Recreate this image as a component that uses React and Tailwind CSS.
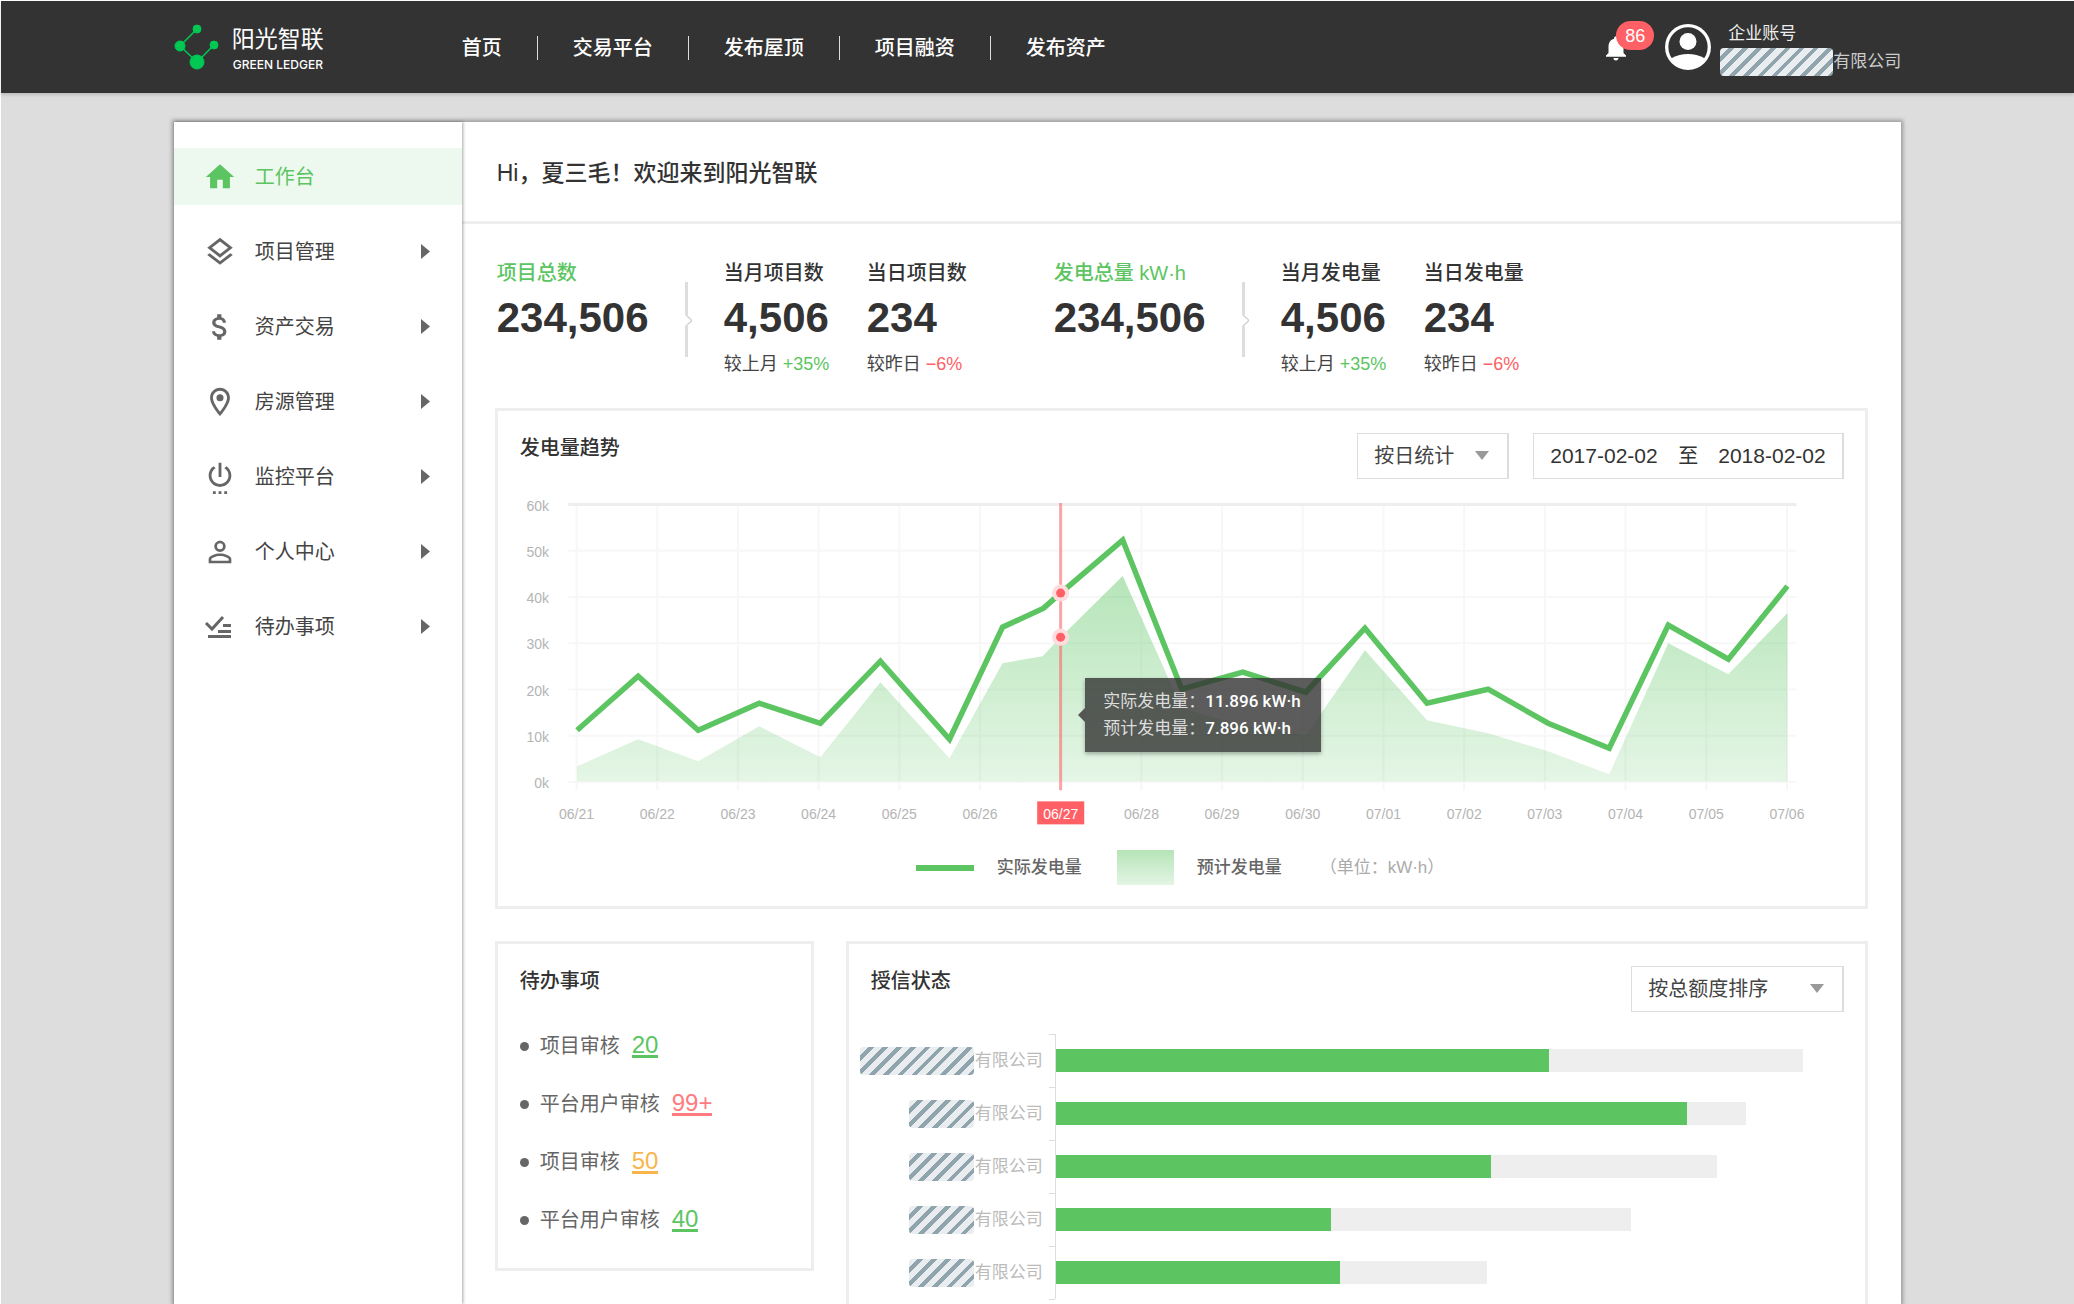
import React from "react";
import {
  MdHome,
  MdOutlineLayers,
  MdAttachMoney,
  MdOutlineLocationOn,
  MdSettingsPower,
  MdPersonOutline,
  MdNotifications,
} from "react-icons/md";

function TodoIcon({ size = 34 }) {
  return (
    <svg width={size} height={size} viewBox="0 0 34 34" fill="none" stroke="currentColor" strokeWidth="3">
      <path d="M3 13l6 6L20 7" />
      <path d="M20 15.5h8M15 21.5h13M5 26.5h23" />
    </svg>
  );
}

const MENU = [
  { label: "工作台", Icon: MdHome, active: true },
  { label: "项目管理", Icon: MdOutlineLayers },
  { label: "资产交易", Icon: MdAttachMoney },
  { label: "房源管理", Icon: MdOutlineLocationOn },
  { label: "监控平台", Icon: MdSettingsPower },
  { label: "个人中心", Icon: MdPersonOutline },
  { label: "待办事项", Icon: TodoIcon },
];

const NAV = ["首页", "交易平台", "发布屋顶", "项目融资", "发布资产"];

const HATCH =
  "rounded-[4px] bg-[repeating-linear-gradient(135deg,#e9edf0_0px,#e9edf0_6px,#90a4ae_6px,#90a4ae_10px)]";

function Header() {
  return (
    <header className="relative z-10 h-[92px] shrink-0 bg-[#333333] text-white shadow-[0_2px_3px_rgba(0,0,0,0.15)]">
      <div className="mx-auto flex h-full w-10/12 items-center">
        <a href="#" className="flex items-center">
          <svg width="46" height="46" viewBox="0 0 46 46" fill="#00c853" stroke="#00c853">
            <path d="M23 5L6 22L23 38L40 21" fill="none" strokeWidth="1.5" />
            <circle cx="23" cy="5" r="4" />
            <circle cx="6" cy="22" r="5" />
            <circle cx="40" cy="21" r="4" />
            <circle cx="23" cy="38" r="7" />
          </svg>
          <span className="ml-3 flex w-24 flex-col pt-1">
            <span className="text-[23px] leading-8">阳光智联</span>
            <span className="whitespace-nowrap pl-px font-['Inter'] text-xs font-medium leading-5">
              GREEN LEDGER
            </span>
          </span>
        </a>
        <nav className="ml-[99px] flex items-center pt-0.5">
          {NAV.map((n, i) => (
            <a
              key={n}
              href="#"
              className={
                "px-[35px] text-xl font-medium leading-6 " + (i > 0 ? "border-l border-[#dddddd]" : "")
              }
            >
              {n}
            </a>
          ))}
        </nav>
        <div className="ml-auto flex items-center">
          <button type="button" aria-label="通知" className="relative mr-[11px] h-[46px] w-[50px]">
            <MdNotifications size={30} className="absolute left-[-3px] top-[9px]" />
            <span className="absolute right-0 top-[-3px] flex h-[29px] w-[38px] items-center justify-center rounded-full bg-[#ff6065] text-lg leading-none">
              86
            </span>
          </button>
          <svg width="46" height="46" viewBox="0 0 46 46">
            <defs>
              <clipPath id="avatar">
                <circle cx="23" cy="23" r="22" />
              </clipPath>
            </defs>
            <circle cx="23" cy="23" r="21.3" fill="none" stroke="#fff" strokeWidth="3.3" />
            <circle cx="23" cy="17.5" r="8.5" fill="#fff" />
            <ellipse cx="23" cy="43" rx="22" ry="13" fill="#fff" clipPath="url(#avatar)" />
          </svg>
          <div className="ml-[9px] flex flex-col pt-1.5">
            <span className="ml-2 text-[17px] leading-6 text-[#eeeeee]">企业账号</span>
            <span className="flex items-center text-[17px] leading-8 text-[#cccccc]">
              <span className={"h-7 w-[113px] " + HATCH} />
              有限公司
            </span>
          </div>
        </div>
      </div>
    </header>
  );
}

function Sidebar() {
  return (
    <aside className="relative z-[1] w-[288px] shrink-0 bg-white pt-[26px] shadow-[1px_0_3px_rgba(0,0,0,0.35)]">
      <ul className="flex flex-col gap-[18px]">
        {MENU.map(({ label, Icon, active }) => (
          <li key={label}>
            <a
              href="#"
              className={
                "flex h-[57px] items-center pl-[29px] pr-8 text-xl " +
                (active ? "bg-[#edf8ef] text-[#5cc562]" : "text-[#444444]")
              }
            >
              <span className={active ? "" : "text-[#666666]"}>
                <Icon size={34} />
              </span>
              <span className="ml-[18px] flex-1">{label}</span>
              {!active && (
                <svg width="9" height="15" viewBox="0 0 9 15" fill="#666">
                  <path d="M0 0L9 7.5L0 15z" />
                </svg>
              )}
            </a>
          </li>
        ))}
      </ul>
    </aside>
  );
}

function Stat({ label, value, note, delta, deltaClass, className, labelClass = "text-[#333333]" }) {
  return (
    <div className={"shrink-0 whitespace-nowrap " + className}>
      <div className={"text-xl font-medium leading-[34px] " + labelClass}>{label}</div>
      <div className="text-[42px] font-bold leading-[56px] text-[#333333]">{value}</div>
      {note && (
        <div className="text-lg leading-9 text-[#444444]">
          {note} <span className={deltaClass}>{delta}</span>
        </div>
      )}
    </div>
  );
}

function StatGroup({ total, month, day }) {
  return (
    <div className="flex">
      <Stat className="w-[188px]" label={total} value="234,506" labelClass="text-[#5cc562]" />
      <svg className="mr-[31px] mt-[26px] shrink-0" width="8" height="75" viewBox="0 0 8 75" fill="none" stroke="#ddd">
        <path d="M1.5 0V33M1.5 44V75" strokeWidth="3" />
        <path d="M1 33C3 36 6.500 36.500 6.500 38.500S3 41 1 44" strokeWidth="1.300" stroke="#ccc" />
      </svg>
      <Stat className="w-[143px]" label={month} value="4,506" note="较上月" delta="+35%" deltaClass="text-[#5cc562]" />
      <Stat className="w-[187px]" label={day} value="234" note="较昨日" delta="−6%" deltaClass="text-[#ff6065]" />
    </div>
  );
}

function Dropdown({ label, options, className }) {
  return (
    <div className={"relative " + className}>
      <select
        aria-label={label}
        className="h-[46px] w-full appearance-none border border-r-2 border-[#dddddd] bg-white pl-4 pr-8 text-xl text-[#444444]"
      >
        {options.map((o) => (
          <option key={o}>{o}</option>
        ))}
      </select>
      <svg className="pointer-events-none absolute right-5 top-[18px]" width="14" height="9" viewBox="0 0 14 9" fill="#999">
        <path d="M0 0H14L7 9z" />
      </svg>
    </div>
  );
}

const DAYS = [
  "06/21", "06/22", "06/23", "06/24", "06/25", "06/26", "06/27", "06/28",
  "06/29", "06/30", "07/01", "07/02", "07/03", "07/04", "07/05", "07/06",
];

const ACTUAL =
  "57,240 118,186 178,240 239,213 300,233 360,171 429,249 482,137 523,118 540,103 602,50 661,199 722,182 785,202 844,138 906,213 967,199 1027,233 1088,258 1147,135 1207,169 1266,96";
const EXPECTED =
  "57,276 118,249 178,271 239,236 300,267 360,192 429,268 482,173 522,166 540,147 602,86 661,218 722,235 785,245 844,160 906,230 967,243 1027,261 1088,284 1147,153 1207,184 1266,123";

function TrendChart() {
  return (
    <div className="relative mt-[11px]">
      <svg className="block w-full" viewBox="0 0 1323 340" fontSize="14" fontFamily="Liberation Sans">
        <defs>
          <linearGradient id="area" x1="0" y1="0" x2="0" y2="1">
            <stop offset="0" stopColor="#5cc562" stopOpacity="0.45" />
            <stop offset="1" stopColor="#5cc562" stopOpacity="0.16" />
          </linearGradient>
        </defs>
        {[60, 50, 40, 30, 20, 10, 0].map((v, i) => (
          <g key={v}>
            <line
              x1="48" x2="1275" y1={14.5 + i * 46.2} y2={14.5 + i * 46.2}
              stroke={i === 0 ? "#eee" : "#f7f7f7"} strokeWidth={i === 0 ? 3 : 2}
            />
            <text x="29" y={20.5 + i * 46.2} textAnchor="end" fill="#b4b4b4">{v}k</text>
          </g>
        ))}
        {DAYS.map((d, i) => {
          const x = 56.5 + i * 80.6;
          const on = d === "06/27";
          return (
            <g key={d}>
              <line x1={x} x2={x} y1="16" y2="300" stroke="#f7f7f7" strokeWidth="2" />
              {on && <rect x={x - 23.5} y="311" width="47" height="23" fill="#ff6065" />}
              <text x={x} y="329" textAnchor="middle" fill={on ? "#fff" : "#b4b4b4"}>{d}</text>
            </g>
          );
        })}
        <polygon points={`${EXPECTED} 1266,291 57,291`} fill="url(#area)" />
        <polyline points={ACTUAL} fill="none" stroke="#5cc562" strokeWidth="5.5" />
        <line x1="540" x2="540" y1="13" y2="300" stroke="#ff6065" strokeOpacity="0.55" strokeWidth="3" />
        {[103, 147].map((y) => (
          <g key={y}>
            <circle cx="540" cy={y} r="8.500" fill="#ffdcdd" />
            <circle cx="540" cy={y} r="4.500" fill="#ff6065" />
          </g>
        ))}
      </svg>
      <div className="absolute left-[42.7%] top-[55.3%] flex h-[74px] w-[236px] flex-col justify-center whitespace-nowrap bg-[#333333]/80 pl-[18px] text-[17px] leading-[26px] text-white shadow-[0_2px_4px_rgba(0,0,0,0.3)]">
        <svg className="absolute left-[-7px] top-[30px]" width="7" height="14" viewBox="0 0 7 14" fill="#555">
          <path d="M7 0L0 7L7 14z" />
        </svg>
        <div>
          <span className="text-[#dddddd]">实际发电量：</span>
          <span className="font-['Roboto'] font-medium">11.896 kW·h</span>
        </div>
        <div>
          <span className="text-[#dddddd]">预计发电量：</span>
          <span className="font-['Roboto'] font-medium">7.896 kW·h</span>
        </div>
      </div>
    </div>
  );
}

function TrendCard() {
  return (
    <section className="mt-[27px] border-3 border-[#eeeeee] pb-[21px] pl-[22px] pr-[21px] pt-[22px]">
      <div className="flex items-start">
        <h2 className="text-xl font-medium leading-[30px] text-[#333333]">发电量趋势</h2>
        <Dropdown label="统计方式" options={["按日统计", "按月统计"]} className="ml-auto w-[152px]" />
        <div className="ml-6 flex h-[46px] w-[311px] items-center justify-between border border-r-2 border-[#dddddd] px-4 text-[21px] text-[#333333]">
          <input aria-label="开始日期" defaultValue="2017-02-02" className="w-[108px]" />
          <span className="text-xl">至</span>
          <input aria-label="结束日期" defaultValue="2018-02-02" className="w-[108px]" />
        </div>
      </div>
      <TrendChart />
      <div className="mr-1 mt-5 flex h-[35px] items-center justify-center text-[17px] text-[#666666]">
        <span className="h-[6px] w-[58px] bg-[#5cc562]" />
        <span className="ml-[23px] font-medium">实际发电量</span>
        <span className="ml-[35px] h-[35px] w-[57px] bg-linear-to-b from-[#b6e4b8] to-[#e3f5e4]" />
        <span className="ml-[23px] font-medium">预计发电量</span>
        <span className="ml-[38px] text-[#aaaaaa]">（单位：kW·h）</span>
      </div>
    </section>
  );
}

const TODOS = [
  { label: "项目审核", count: "20", color: "text-[#5cc562] border-[#5cc562]" },
  { label: "平台用户审核", count: "99+", color: "text-[#ff7b7f] border-[#ff7b7f]" },
  { label: "项目审核", count: "50", color: "text-[#f8b54c] border-[#f8b54c]" },
  { label: "平台用户审核", count: "40", color: "text-[#5cc562] border-[#5cc562]" },
];

function TodoCard() {
  return (
    <section className="w-[319px] shrink-0 border-3 border-[#eeeeee] px-[22px] pb-[19px] pt-[22px]">
      <h2 className="text-xl font-medium leading-[30px] text-[#333333]">待办事项</h2>
      <ul className="mt-[21px]">
        {TODOS.map((t, i) => (
          <li key={i} className="flex h-[58px] items-center text-xl text-[#666666]">
            <span className="mr-[11px] h-[9px] w-[9px] rounded-full bg-[#666666]" />
            {t.label}
            <a href="#" className={"ml-3 border-b-3 text-2xl leading-5 " + t.color}>
              {t.count}
            </a>
          </li>
        ))}
      </ul>
    </section>
  );
}

const CREDIT = [
  { used: 493, total: 747, wide: true },
  { used: 631, total: 690 },
  { used: 435, total: 661 },
  { used: 275, total: 575 },
  { used: 284, total: 431 },
];
const SCALE = 788;

function CreditCard() {
  return (
    <section className="flex-1 border-3 border-[#eeeeee] pb-8 pr-[21px] pt-[22px]">
      <div className="flex items-start pl-[22px]">
        <h2 className="text-xl font-medium leading-[30px] text-[#333333]">授信状态</h2>
        <Dropdown label="排序方式" options={["按总额度排序", "按已用额度排序"]} className="ml-auto w-[213px]" />
      </div>
      <div className="mt-[22px]">
        {CREDIT.map((c, i) => (
          <div key={i} className="flex h-[53px] items-stretch">
            <div className="flex w-[200px] shrink-0 items-center justify-end pr-[6px] text-[17px] text-[#bbbbbb]">
              <span className={"h-7 " + (c.wide ? "w-[114px] " : "w-[65px] ") + HATCH} />
              <span className="pl-px">有限公司</span>
            </div>
            <div className="w-[6px] shrink-0 border-t border-[#dddddd]" />
            <div className="flex flex-1 items-center border-l border-[#dddddd]">
              <div className="h-[23px] bg-[#eeeeee]" style={{ width: `${(c.total / SCALE) * 100}%` }}>
                <div className="h-full bg-[#5cc562]" style={{ width: `${(c.used / c.total) * 100}%` }} />
              </div>
            </div>
          </div>
        ))}
        <div className="ml-[200px] w-[6px] border-t border-[#dddddd]" />
      </div>
    </section>
  );
}

export default function App() {
  return (
    <div className="flex h-screen flex-col overflow-hidden bg-white pl-px pt-px font-['Liberation_Sans','Noto_Sans_CJK_SC',sans-serif]">
      <Header />
      <div className="flex min-h-0 flex-1 bg-[#dddddd] pt-[29px]">
        <div className="mx-auto flex w-10/12 bg-white shadow-[0_0_4px_2px_rgba(0,0,0,0.3)]">
          <Sidebar />
          <main className="min-w-0 flex-1">
            <div className="flex h-[102px] items-center border-b-3 border-[#eeeeee] pl-[35px] pt-1">
              <h1 className="text-[23px] font-medium text-[#333333]">Hi，夏三毛！欢迎来到阳光智联</h1>
            </div>
            <div className="pl-[33px] pr-[33px] pt-8">
              <div className="flex h-[125px] pl-0.5">
                <StatGroup total="项目总数" month="当月项目数" day="当日项目数" />
                <StatGroup total="发电总量 kW·h" month="当月发电量" day="当日发电量" />
              </div>
              <TrendCard />
              <div className="mt-8 flex items-start gap-8">
                <TodoCard />
                <div className="flex min-h-[480px] min-w-0 flex-1">
                  <CreditCard />
                </div>
              </div>
            </div>
          </main>
        </div>
      </div>
    </div>
  );
}
